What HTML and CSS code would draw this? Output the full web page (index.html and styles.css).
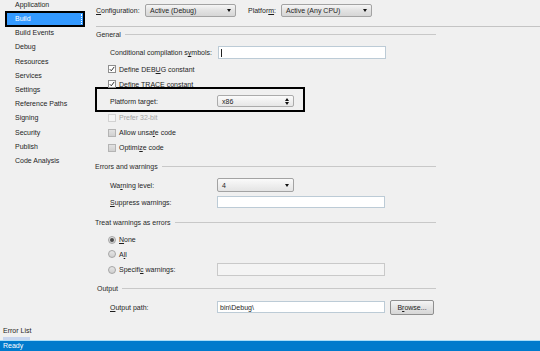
FILE: index.html
```html
<!DOCTYPE html>
<html>
<head lang="en">
    <meta charset="UTF-8">
    <title>Project Properties - Build</title>
    <link rel="stylesheet" href="styles.css">
</head>
<body>
    <div class="window">
        <div class="main">
            <ul class="nav">
                <li class="nav-item">Application</li>
                <li class="nav-item active">Build</li>
                <li class="nav-item">Build Events</li>
                <li class="nav-item">Debug</li>
                <li class="nav-item">Resources</li>
                <li class="nav-item">Services</li>
                <li class="nav-item">Settings</li>
                <li class="nav-item">Reference Paths</li>
                <li class="nav-item">Signing</li>
                <li class="nav-item">Security</li>
                <li class="nav-item">Publish</li>
                <li class="nav-item">Code Analysis</li>
            </ul>
            <div class="page">
                <div class="config-bar">
                    <span class="config-label"><u>C</u>onfiguration:</span>
                    <div class="combo combo-config"><span>Active (Debug)</span><span class="arrow"></span></div>
                    <span class="config-label platform-label">Platfor<u>m</u>:</span>
                    <div class="combo combo-config"><span>Active (Any CPU)</span><span class="arrow"></span></div>
                </div>
                <div class="top-rule"></div>

                <div class="sections">
                    <div class="heading h-general"><span>General</span><span class="rule"></span></div>

                    <div class="row row-cond">
                        <span class="label">Conditional compilation s<u>y</u>mbols:</span>
                        <div class="textbox tb-cond"><span class="caret"></span></div>
                    </div>
                    <div class="row check-row row-debug">
                        <span class="check checked">
                            <svg width="6" height="6" viewBox="0 0 6 6"><path d="M0.8 3.2 L2.3 4.8 L5.2 0.9" fill="none" stroke="#333" stroke-width="1"/></svg>
                        </span>
                        <span>Define DEB<u>U</u>G constant</span>
                    </div>
                    <div class="row check-row row-trace">
                        <span class="check checked">
                            <svg width="6" height="6" viewBox="0 0 6 6"><path d="M0.8 3.2 L2.3 4.8 L5.2 0.9" fill="none" stroke="#333" stroke-width="1"/></svg>
                        </span>
                        <span>Define TRACE constant</span>
                    </div>

                    <div class="target-box">
                        <div class="row target-row">
                            <span class="label">Platform target:</span>
                            <div class="combo combo-target">
                                <span>x86</span>
                                <svg class="spin" width="4" height="7" viewBox="0 0 4 7"><path d="M2 0 L4 3 L0 3 Z M0 4 L4 4 L2 7 Z" fill="#111"/></svg>
                            </div>
                        </div>
                    </div>

                    <div class="row check-row row-prefer disabled">
                        <span class="check off"></span>
                        <span>Prefer 32-bit</span>
                    </div>
                    <div class="row check-row row-std">
                        <span class="check empty"></span>
                        <span>Allow unsa<u>f</u>e code</span>
                    </div>
                    <div class="row check-row row-std">
                        <span class="check empty"></span>
                        <span>Optimi<u>z</u>e code</span>
                    </div>

                    <div class="heading h-errors"><span>Errors and warnings</span><span class="rule"></span></div>

                    <div class="row row-warn">
                        <span class="label">Wa<u>r</u>ning level:</span>
                        <div class="combo combo-warn"><span>4</span><span class="arrow"></span></div>
                    </div>
                    <div class="row row-suppress">
                        <span class="label"><u>S</u>uppress warnings:</span>
                        <div class="textbox tb-suppress"></div>
                    </div>

                    <div class="heading h-treat"><span>Treat warnings as errors</span><span class="rule"></span></div>

                    <div class="row check-row row-none">
                        <span class="radio selected"><span class="dot"></span></span>
                        <span><u>N</u>one</span>
                    </div>
                    <div class="row check-row row-all">
                        <span class="radio"></span>
                        <span>A<u>l</u>l</span>
                    </div>
                    <div class="row check-row row-specific">
                        <span class="radio"></span>
                        <span class="radio-label">Specifi<u>c</u> warnings:</span>
                        <div class="textbox tb-specific disabled-box"></div>
                    </div>

                    <div class="heading h-output"><span>Output</span><span class="rule"></span></div>

                    <div class="row row-output">
                        <span class="label"><u>O</u>utput path:</span>
                        <div class="textbox tb-output"><span>bin\Debug\</span></div>
                        <div class="button">B<u>r</u>owse...</div>
                    </div>
                </div>
            </div>
        </div>
        <div class="tabs">
            <span class="tab">Error List</span>
        </div>
        <div class="status">Ready</div>
    </div>
</body>
</html>
```

FILE: styles.css
```css
html, body {
    margin: 0;
    padding: 0;
}

body {
    width: 540px;
    height: 351px;
    overflow: hidden;
    background: #f0f0f0;
    font-family: "Liberation Sans", Arial, sans-serif;
    font-size: 7px;
    color: #1e1e1e;
}

u {
    text-decoration: underline;
    text-underline-offset: 1px;
}

.window {
    display: flex;
    flex-direction: column;
    height: 351px;
}

.main {
    display: flex;
    height: 325px;
    overflow: hidden;
}

/* left navigation */

.nav {
    list-style: none;
    margin: -2.1px 0 0 0;
    padding: 0;
    width: 85px;
    flex-shrink: 0;
}

.nav-item {
    height: 14.2px;
    line-height: 14.2px;
    padding-left: 15px;
    white-space: nowrap;
}

.nav-item.active {
    position: relative;
    margin: -1px 0 -1px 5px;
    height: 12.2px;
    line-height: 12.2px;
    padding-left: 8px;
    box-sizing: content-box;
    width: 68px;
    border: 2px solid #000;
    background: #3399ff;
    color: #fff;
}

.nav-item.active::after {
    content: "";
    position: absolute;
    right: 1px;
    top: 1px;
    bottom: 1px;
    border-right: 1px dotted #fff;
}

/* right page */

.page {
    flex: 1;
    padding-top: 4px;
}

.config-bar {
    display: flex;
    align-items: center;
    height: 13px;
    padding-left: 11px;
}

.config-label {
    width: 49px;
    flex-shrink: 0;
    white-space: nowrap;
}

.platform-label {
    width: 33px;
    margin-left: 12px;
}

.combo {
    display: flex;
    align-items: center;
    box-sizing: border-box;
    border: 1px solid #a3a3a3;
    border-radius: 2px;
    background: linear-gradient(#f6f6f6, #e2e2e2 50%, #d6d6d6);
    padding: 0 4px 0 4px;
    white-space: nowrap;
}

.combo .arrow {
    margin-left: auto;
    width: 0;
    height: 0;
    border-left: 2px solid transparent;
    border-right: 2px solid transparent;
    border-top: 3px solid #111;
}

.combo-config {
    width: 91px;
    height: 13px;
}

.top-rule {
    margin: 9px 0 0 11px;
    border-top: 1px solid #c4c4c4;
}

.sections {
    margin-left: 10px;
    width: 341px;
}

.heading {
    display: flex;
    align-items: center;
    gap: 4px;
    height: 10px;
    white-space: nowrap;
    color: #2a2a2a;
}

.heading .rule {
    flex: 1;
    border-top: 1px solid #c8c8c8;
}

.h-general {
    margin-top: 2px;
    padding-left: 1px;
}

.h-errors {
    margin-top: 6px;
}

.h-treat {
    margin-top: 9px;
}

.h-output {
    margin-top: 6px;
    padding-left: 2px;
}

.row {
    display: flex;
    align-items: center;
    padding-left: 15px;
    white-space: nowrap;
}

.row .label {
    width: 107px;
    flex-shrink: 0;
}

.check-row {
    padding-left: 13px;
    gap: 3px;
}

.textbox {
    display: flex;
    align-items: center;
    box-sizing: border-box;
    width: 168px;
    background: #fff;
    border: 1px solid #bccbd6;
    padding-left: 2px;
}

.caret {
    width: 1px;
    height: 8px;
    background: #222;
}

.row-cond {
    margin-top: 7px;
    height: 13px;
}

.tb-cond {
    height: 13px;
    margin-left: 1px;
}

.row-debug {
    margin-top: 3px;
    height: 14px;
}

.row-trace {
    margin-top: 1px;
    height: 14px;
}

.check {
    display: flex;
    align-items: center;
    justify-content: center;
    box-sizing: border-box;
    width: 8px;
    height: 8px;
    border: 1px solid #8e8e8e;
    background: #fff;
}

.check.empty {
    border-color: #b4b4b4;
    background: linear-gradient(#e2e2e2, #d0d0d0);
}

.check.off {
    border-color: #d2d2d2;
    background: #f4f4f4;
}

.disabled {
    color: #a3a3a3;
}

.target-box {
    margin-top: -4px;
    width: 210px;
    height: 25px;
    box-sizing: border-box;
    border: 2px solid #000;
    padding-top: 3px;
}

.target-row {
    height: 18px;
    padding-left: 13px;
}

.combo-target {
    width: 77px;
    height: 12px;
    background: linear-gradient(#fbfbfb, #e6e6e6);
    border-color: #ababab;
}

.combo-target .spin {
    margin-left: auto;
}

.row-prefer {
    margin-top: -2px;
    height: 15px;
}

.row-std {
    height: 15px;
}

.row-warn {
    margin-top: 7px;
    height: 14px;
}

.combo-warn {
    width: 77px;
    height: 14px;
    background: linear-gradient(#fafafa, #e4e4e4);
}

.row-suppress {
    margin-top: 4px;
    height: 12px;
}

.tb-suppress {
    height: 12px;
}

.radio {
    display: flex;
    align-items: center;
    justify-content: center;
    box-sizing: border-box;
    width: 8px;
    height: 8px;
    border: 1px solid #a5a5a5;
    border-radius: 50%;
    background: linear-gradient(#e6e6e6, #cfcfcf);
}

.radio .dot {
    width: 4px;
    height: 4px;
    border-radius: 50%;
    background: #4a4a4a;
}

.row-none {
    margin-top: 5px;
    height: 15px;
}

.row-all {
    height: 14px;
}

.row-specific {
    margin-top: 1px;
    height: 15px;
}

.radio-label {
    width: 95px;
}

.tb-specific {
    height: 13px;
}

.disabled-box {
    background: #f4f4f4;
    border-color: #c9c9c9;
}

.row-output {
    margin-top: 6px;
    height: 16px;
}

.tb-output {
    height: 12px;
}

.button {
    display: flex;
    align-items: center;
    justify-content: center;
    box-sizing: border-box;
    margin-left: 5px;
    width: 44px;
    height: 15px;
    border: 1px solid #8f8f8f;
    border-radius: 2px;
    background: linear-gradient(#f4f4f4, #e4e4e4 50%, #d6d6d6);
}

/* bottom strip */

.tabs {
    height: 15px;
    padding-left: 3px;
    display: flex;
    align-items: flex-end;
}

.tab {
    display: block;
    width: 27px;
    padding-bottom: 2px;
    border-bottom: 3px solid #c9d6ee;
    line-height: 8px;
    white-space: nowrap;
}

.status {
    height: 10px;
    line-height: 10px;
    border-top: 1px solid #a9dcf7;
    background: #007acc;
    color: #fff;
    padding-left: 3px;
}
```
